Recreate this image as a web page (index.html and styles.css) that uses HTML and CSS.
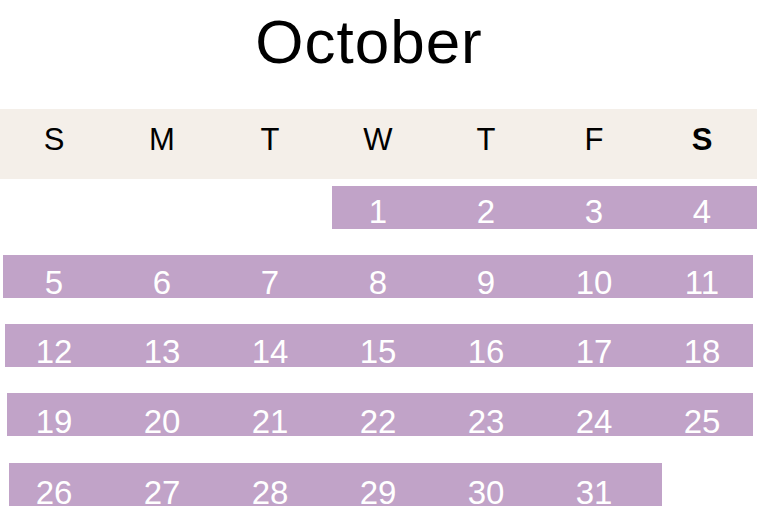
FILE: index.html
```html
<!DOCTYPE html>
<html lang="en">
<head>
<meta charset="utf-8">
<title>October</title>
<link rel="stylesheet" href="styles.css">
</head>
<body>
<div class="cal">
  <h1 class="title">October</h1>
  <div class="week-head">
    <span>S</span><span>M</span><span>T</span><span>W</span><span>T</span><span>F</span><span class="sat">S</span>
  </div>
  <div class="week w1">
    <span></span><span></span><span></span><span>1</span><span>2</span><span>3</span><span>4</span>
  </div>
  <div class="week w2">
    <span>5</span><span>6</span><span>7</span><span>8</span><span>9</span><span>10</span><span>11</span>
  </div>
  <div class="week w3">
    <span>12</span><span>13</span><span>14</span><span>15</span><span>16</span><span>17</span><span>18</span>
  </div>
  <div class="week w4">
    <span>19</span><span>20</span><span>21</span><span>22</span><span>23</span><span>24</span><span>25</span>
  </div>
  <div class="week w5">
    <span>26</span><span>27</span><span>28</span><span>29</span><span>30</span><span>31</span><span></span>
  </div>
</div>
</body>
</html>
```
FILE: styles.css
```css
html, body {
  margin: 0;
  padding: 0;
  background: #ffffff;
}

body {
  font-family: "Liberation Sans", Arial, sans-serif;
  color: #000000;
}

.cal {
  width: 757px;
}

.title {
  margin: 12px 0 37px;
  padding-right: 19px;
  font-size: 62px;
  line-height: 60px;
  letter-spacing: 1px;
  font-weight: normal;
  text-align: center;
}

.week-head {
  display: grid;
  grid-template-columns: repeat(7, 108px);
  box-sizing: border-box;
  height: 70px;
  padding-top: 15px;
  background: #f4efe9;
  font-size: 31px;
  line-height: 31px;
  text-align: center;
}

.week-head .sat {
  font-weight: bold;
}

.week {
  display: grid;
  grid-template-columns: repeat(7, 108px);
  box-sizing: border-box;
  height: 43px;
  margin-top: 26px;
  font-size: 33px;
  line-height: 33px;
  color: #ffffff;
  text-align: center;
  background-image: linear-gradient(#c1a3c8, #c1a3c8);
  background-repeat: no-repeat;
}

.w1 {
  margin-top: 7px;
  padding-top: 9px;
  background-position: 332px 0;
  background-size: 425px 100%;
}

.w2 {
  padding-top: 11px;
  background-position: 3px 0;
  background-size: 750px 100%;
}

.w3 {
  padding-top: 11px;
  background-position: 5px 0;
  background-size: 748px 100%;
}

.w4 {
  padding-top: 12px;
  background-position: 7px 0;
  background-size: 746px 100%;
}

.w5 {
  margin-top: 27px;
  padding-top: 13px;
  background-position: 9px 0;
  background-size: 653px 100%;
}
```
